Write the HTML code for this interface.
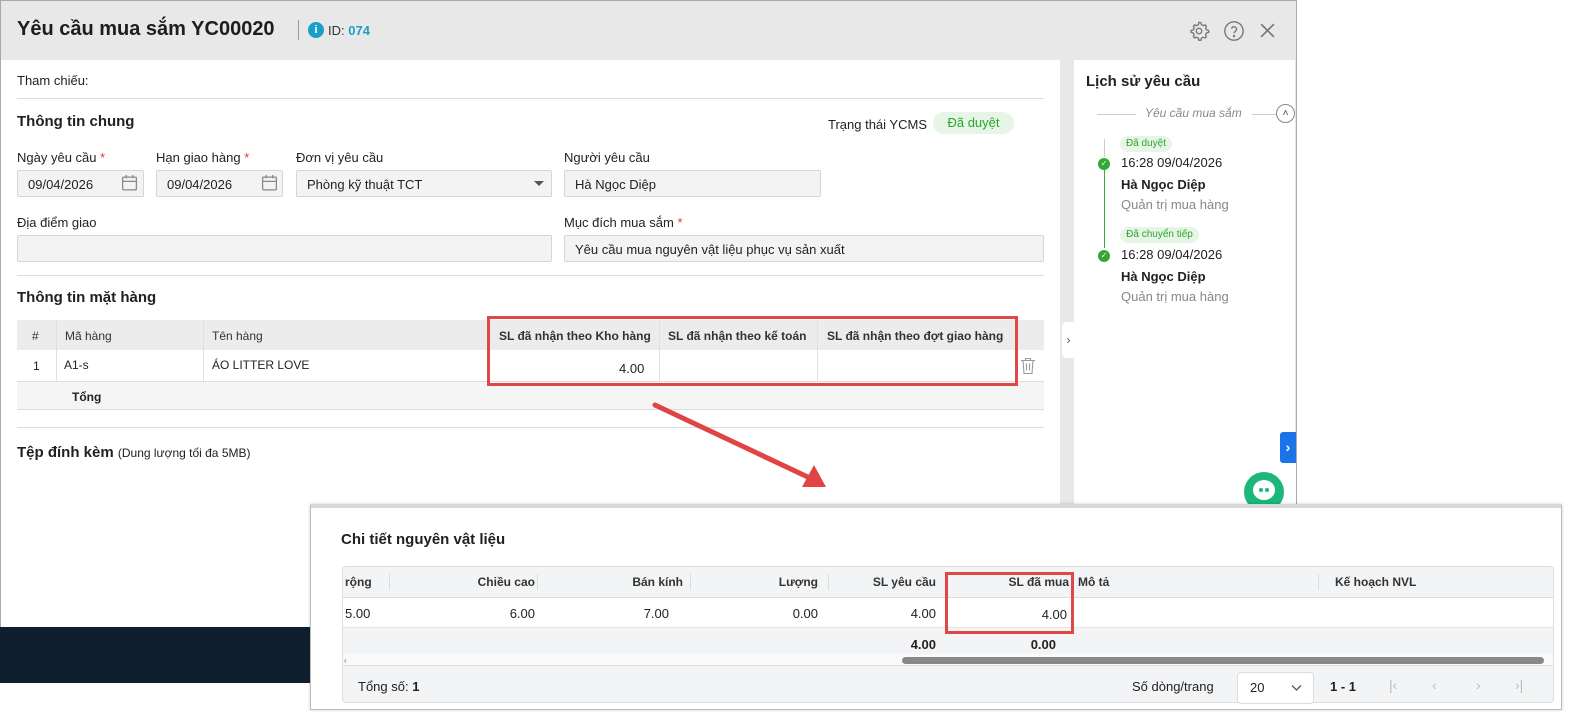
<!DOCTYPE html>
<html><head><meta charset="utf-8">
<style>
*{box-sizing:border-box;margin:0;padding:0}
body{width:1586px;height:720px;position:relative;overflow:hidden;background:#fff;font-family:"Liberation Sans","DejaVu Sans",sans-serif;color:#212121;font-size:13px}
.a{position:absolute;white-space:nowrap}
.inp{position:absolute;background:#f3f3f3;border:1px solid #d6d6d6;border-radius:2px;height:27px;font-size:13px;padding:6px 10px;color:#222}
.lbl{position:absolute;font-size:13px;color:#222}
.req{color:#e53935}
.hr{position:absolute;height:1px;background:#dcdcdc}
.th{position:absolute;font-size:12px;color:#333;font-weight:bold}
</style></head><body>
<!-- main modal -->
<div class="a" style="left:0;top:0;width:1297px;height:628px;border:1px solid #a9a9a9;background:#e8e8e8"></div>
<div class="a" style="left:1px;top:60px;width:1059px;height:567px;background:#fff"></div>
<div class="a" style="left:1074px;top:60px;width:221px;height:567px;background:#fff"></div>
<div class="a" style="left:0;top:627px;width:320px;height:56px;background:#0f1f2e"></div>
<!-- header -->
<div class="a" style="left:17px;top:18px;font-size:20px;font-weight:bold;color:#1d1d1d">Yêu cầu mua sắm YC00020</div>
<div class="a" style="left:298px;top:20px;width:1px;height:20px;background:#999"></div>
<div class="a" style="left:308px;top:22px;width:16px;height:16px;border-radius:50%;background:#1a9fc9;color:#fff;font-size:11px;font-weight:bold;text-align:center;line-height:16px">i</div>
<div class="a" style="left:328px;top:23px;font-size:13px;color:#333">ID: <b style="color:#1a9fc9">074</b></div>
<svg class="a" style="left:1188px;top:20px" width="22" height="22" viewBox="0 0 24 24" fill="none" stroke="#777" stroke-width="1.5"><circle cx="12" cy="12" r="3"/><path d="M12 2.5l2 .3.6 2.3 1.8 1 2.2-.8 1.4 1.5-.8 2.2 1 1.8 2.3.6v2.1l-2.3.6-1 1.8.8 2.2-1.4 1.5-2.2-.8-1.8 1-.6 2.3h-2.1l-.6-2.3-1.8-1-2.2.8-1.4-1.5.8-2.2-1-1.8-2.3-.6v-2.1l2.3-.6 1-1.8-.8-2.2 1.4-1.5 2.2.8 1.8-1 .6-2.3z"/></svg>
<svg class="a" style="left:1223px;top:20px" width="22" height="22" viewBox="0 0 24 24" fill="none" stroke="#777" stroke-width="1.5"><circle cx="12" cy="12" r="10"/><path d="M9.2 9.3a2.9 2.9 0 0 1 5.6 1c0 2-2.8 2.4-2.8 4.2"/><circle cx="12" cy="17.6" r=".6" fill="#777"/></svg>
<svg class="a" style="left:1259px;top:22px" width="17" height="17" viewBox="0 0 16 16" stroke="#777" stroke-width="1.5"><path d="M2 2l12 12M14 2L2 14"/></svg>

<!-- left content -->
<div class="lbl" style="left:17px;top:73px">Tham chiếu:</div>
<div class="hr" style="left:17px;top:98px;width:1027px"></div>
<div class="a" style="left:17px;top:113px;font-size:15px;font-weight:bold">Thông tin chung</div>
<div class="lbl" style="left:828px;top:117px">Trạng thái YCMS</div>
<div class="a" style="left:933px;top:112px;width:81px;height:22px;border-radius:11px;background:#e7f5e7;color:#2aa52a;font-size:13px;text-align:center;line-height:22px">Đã duyệt</div>

<div class="lbl" style="left:17px;top:150px">Ngày yêu cầu <span class="req">*</span></div>
<div class="lbl" style="left:156px;top:150px">Hạn giao hàng <span class="req">*</span></div>
<div class="lbl" style="left:296px;top:150px">Đơn vị yêu cầu</div>
<div class="lbl" style="left:564px;top:150px">Người yêu cầu</div>
<div class="inp" style="left:17px;top:170px;width:127px">09/04/2026</div>
<div class="inp" style="left:156px;top:170px;width:127px">09/04/2026</div>
<svg class="a" style="left:121px;top:174px" width="17" height="18" viewBox="0 0 16 17" fill="none" stroke="#888" stroke-width="1.2"><rect x="1.5" y="3" width="13" height="12" rx="1"/><path d="M1.5 7h13M5 1v3M11 1v3"/></svg>
<svg class="a" style="left:261px;top:174px" width="17" height="18" viewBox="0 0 16 17" fill="none" stroke="#888" stroke-width="1.2"><rect x="1.5" y="3" width="13" height="12" rx="1"/><path d="M1.5 7h13M5 1v3M11 1v3"/></svg>
<div class="inp" style="left:296px;top:170px;width:256px">Phòng kỹ thuật TCT</div>
<div class="a" style="left:534px;top:181px;width:0;height:0;border-left:5px solid transparent;border-right:5px solid transparent;border-top:5px solid #555"></div>
<div class="inp" style="left:564px;top:170px;width:257px">Hà Ngọc Diệp</div>

<div class="lbl" style="left:17px;top:215px">Địa điểm giao</div>
<div class="lbl" style="left:564px;top:215px">Mục đích mua sắm <span class="req">*</span></div>
<div class="inp" style="left:17px;top:235px;width:535px"></div>
<div class="inp" style="left:564px;top:235px;width:480px">Yêu cầu mua nguyên vật liệu phục vụ sản xuất</div>
<div class="hr" style="left:17px;top:275px;width:1027px"></div>
<div class="a" style="left:17px;top:289px;font-size:15px;font-weight:bold">Thông tin mặt hàng</div>

<div class="a" style="left:17px;top:320px;width:1027px;height:30px;background:#ececec"></div>
<div class="a" style="left:17px;top:382px;width:1027px;height:28px;background:#f5f5f5;border-bottom:1px solid #ddd"></div>
<div class="a" style="left:17px;top:381px;width:1027px;height:1px;background:#ddd"></div>
<div class="a" style="left:56px;top:320px;width:1px;height:62px;background:#e0e0e0"></div>
<div class="a" style="left:203px;top:320px;width:1px;height:62px;background:#e0e0e0"></div>
<div class="a" style="left:659px;top:320px;width:1px;height:62px;background:#e0e0e0"></div>
<div class="a" style="left:817px;top:320px;width:1px;height:62px;background:#e0e0e0"></div>
<div class="th" style="left:32px;top:329px;font-weight:normal">#</div>
<div class="th" style="left:65px;top:329px;font-weight:normal">Mã hàng</div>
<div class="th" style="left:212px;top:329px;font-weight:normal">Tên hàng</div>
<div class="th" style="left:499px;top:329px">SL đã nhận theo Kho hàng</div>
<div class="th" style="left:668px;top:329px">SL đã nhận theo kế toán</div>
<div class="th" style="left:827px;top:329px">SL đã nhận theo đợt giao hàng</div>
<div class="lbl" style="left:33px;top:359px;font-size:12px">1</div>
<div class="lbl" style="left:64px;top:358px;font-size:12px">A1-s</div>
<div class="lbl" style="left:212px;top:358px;font-size:12px">ÁO LITTER LOVE</div>
<div class="lbl" style="left:619px;top:361px">4.00</div>
<svg class="a" style="left:1020px;top:357px" width="16" height="18" viewBox="0 0 16 18" fill="none" stroke="#999" stroke-width="1.1"><path d="M1 3.5h14M5.5 3.5V1.5h5v2M3 3.5l1 13h8l1-13M6.5 6.5v7M9.5 6.5v7"/></svg>
<div class="lbl" style="left:72px;top:390px;font-size:12px;font-weight:bold">Tổng</div>
<div class="a" style="left:487px;top:316px;width:531px;height:70px;border:3px solid #e04848"></div>
<div class="hr" style="left:17px;top:427px;width:1027px"></div>
<div class="a" style="left:17px;top:444px;font-size:15px;font-weight:bold">Tệp đính kèm <span style="font-size:12px;font-weight:normal">(Dung lượng tối đa 5MB)</span></div>

<!-- collapse tab -->
<div class="a" style="left:1062px;top:322px;width:13px;height:36px;background:#fff;border-radius:4px 0 0 4px;font-size:12px;color:#555;line-height:36px;text-align:center">›</div>

<!-- right panel -->
<div class="a" style="left:1086px;top:73px;font-size:15px;font-weight:bold">Lịch sử yêu cầu</div>
<div class="a" style="left:1097px;top:114px;width:39px;height:1px;background:#ccc"></div>
<div class="a" style="left:1145px;top:106px;font-size:12px;font-style:italic;color:#888">Yêu cầu mua sắm</div>
<div class="a" style="left:1252px;top:114px;width:24px;height:1px;background:#ccc"></div>
<div class="a" style="left:1276px;top:104px;width:19px;height:19px;border:1px solid #888;border-radius:50%;text-align:center;font-size:10px;line-height:18px;color:#444">˄</div>
<div class="a" style="left:1104px;top:139px;width:1px;height:18px;background:#ccc"></div>
<div class="a" style="left:1104px;top:170px;width:1px;height:78px;background:#3aaa3a"></div>
<div class="a" style="left:1120px;top:136px;width:52px;height:16px;border-radius:8px;background:#e7f5e7;color:#2aa52a;font-size:10px;text-align:center;line-height:16px">Đã duyệt</div>
<div class="a" style="left:1098px;top:158px;width:12px;height:12px;border-radius:50%;background:#34a834;color:#fff;font-size:8px;text-align:center;line-height:12px">✓</div>
<div class="a" style="left:1121px;top:155px;font-size:13px">16:28 09/04/2026</div>
<div class="a" style="left:1121px;top:177px;font-size:13px;font-weight:bold">Hà Ngọc Diệp</div>
<div class="a" style="left:1121px;top:197px;font-size:13px;color:#888">Quản trị mua hàng</div>
<div class="a" style="left:1120px;top:227px;width:79px;height:16px;border-radius:8px;background:#e7f5e7;color:#2aa52a;font-size:10px;text-align:center;line-height:16px">Đã chuyển tiếp</div>
<div class="a" style="left:1098px;top:250px;width:12px;height:12px;border-radius:50%;background:#34a834;color:#fff;font-size:8px;text-align:center;line-height:12px">✓</div>
<div class="a" style="left:1121px;top:247px;font-size:13px">16:28 09/04/2026</div>
<div class="a" style="left:1121px;top:269px;font-size:13px;font-weight:bold">Hà Ngọc Diệp</div>
<div class="a" style="left:1121px;top:289px;font-size:13px;color:#888">Quản trị mua hàng</div>
<div class="a" style="left:1280px;top:432px;width:16px;height:31px;background:#1a73e8;border-radius:3px 0 0 3px;color:#fff;font-weight:bold;text-align:center;line-height:31px;font-size:14px">›</div>
<div class="a" style="left:1249px;top:464px;width:47px;height:44px;background:#fff;border-radius:6px 0 0 0"></div>
<div class="a" style="left:1244px;top:472px;width:40px;height:40px;border-radius:50%;background:#1bb87a"></div>
<div class="a" style="left:1253px;top:480px;width:22px;height:20px;border-radius:50%;background:#fff"></div>
<div class="a" style="left:1259px;top:488px;width:4px;height:4px;border-radius:50%;background:#1bb87a"></div>
<div class="a" style="left:1265px;top:488px;width:4px;height:4px;border-radius:50%;background:#1bb87a"></div>

<!-- arrow -->
<svg class="a" style="left:640px;top:395px" width="200" height="100" viewBox="0 0 200 100"><line x1="15" y1="10" x2="172" y2="84" stroke="#e04444" stroke-width="5" stroke-linecap="round"/><polygon points="186,92 162,92 174,70" fill="#e04444"/></svg>

<!-- overlay panel -->
<div class="a" style="left:310px;top:504px;width:1252px;height:206px;background:#fff;border:1px solid #bbb;border-top:4px solid #d8d8d8;box-shadow:0 0 3px rgba(0,0,0,.2)"></div>
<div class="a" style="left:341px;top:531px;font-size:15px;font-weight:bold">Chi tiết nguyên vật liệu</div>
<div class="a" style="left:342px;top:566px;width:1212px;height:137px;border:1px solid #ddd;border-radius:4px;background:#f3f4f6"></div>
<div class="a" style="left:343px;top:597px;width:1210px;height:31px;background:#fff;border-top:1px solid #ddd;border-bottom:1px solid #e4e4e4"></div>
<div class="a" style="left:343px;top:654px;width:1210px;height:12px;background:#fafafa;border-bottom:1px solid #ddd"></div>
<div class="a" style="left:902px;top:657px;width:642px;height:7px;border-radius:4px;background:#888"></div>
<div class="a" style="left:344px;top:656px;font-size:8px;color:#666">‹</div>
<div class="a" style="left:389px;top:574px;width:1px;height:16px;background:#ddd"></div>
<div class="a" style="left:537px;top:574px;width:1px;height:16px;background:#ddd"></div>
<div class="a" style="left:690px;top:574px;width:1px;height:16px;background:#ddd"></div>
<div class="a" style="left:828px;top:574px;width:1px;height:16px;background:#ddd"></div>
<div class="a" style="left:946px;top:574px;width:1px;height:16px;background:#ddd"></div>
<div class="a" style="left:1318px;top:574px;width:1px;height:16px;background:#ddd"></div>
<div class="th" style="left:345px;top:575px">rộng</div>
<div class="th" style="right:1051px;top:575px">Chiều cao</div>
<div class="th" style="right:903px;top:575px">Bán kính</div>
<div class="th" style="right:768px;top:575px">Lượng</div>
<div class="th" style="right:650px;top:575px">SL yêu cầu</div>
<div class="th" style="right:517px;top:575px">SL đã mua</div>
<div class="th" style="left:1078px;top:575px">Mô tả</div>
<div class="th" style="left:1335px;top:575px">Kế hoạch NVL</div>
<div class="a" style="left:345px;top:606px">5.00</div>
<div class="a" style="right:1051px;top:606px">6.00</div>
<div class="a" style="right:917px;top:606px">7.00</div>
<div class="a" style="right:768px;top:606px">0.00</div>
<div class="a" style="right:650px;top:606px">4.00</div>
<div class="a" style="right:519px;top:607px">4.00</div>
<div class="a" style="right:650px;top:637px;font-weight:bold">4.00</div>
<div class="a" style="right:530px;top:637px;font-weight:bold">0.00</div>
<div class="a" style="left:945px;top:572px;width:129px;height:62px;border:3px solid #e04848"></div>
<div class="a" style="left:358px;top:679px">Tổng số: <b>1</b></div>
<div class="a" style="left:1132px;top:679px">Số dòng/trang</div>
<div class="a" style="left:1237px;top:672px;width:77px;height:32px;background:#fff;border:1px solid #ddd;border-radius:4px;padding:7px 12px;font-size:13px">20</div>
<svg class="a" style="left:1291px;top:684px" width="11" height="8" viewBox="0 0 11 8" fill="none" stroke="#555" stroke-width="1.3"><path d="M1 1.5l4.5 4.5 4.5-4.5"/></svg>
<div class="a" style="left:1330px;top:679px;font-weight:bold">1 - 1</div>
<div class="a" style="left:1389px;top:677px;color:#bbb;font-size:14px">|‹</div>
<div class="a" style="left:1432px;top:677px;color:#bbb;font-size:14px">‹</div>
<div class="a" style="left:1476px;top:677px;color:#bbb;font-size:14px">›</div>
<div class="a" style="left:1515px;top:677px;color:#bbb;font-size:14px">›|</div>
</body></html>
